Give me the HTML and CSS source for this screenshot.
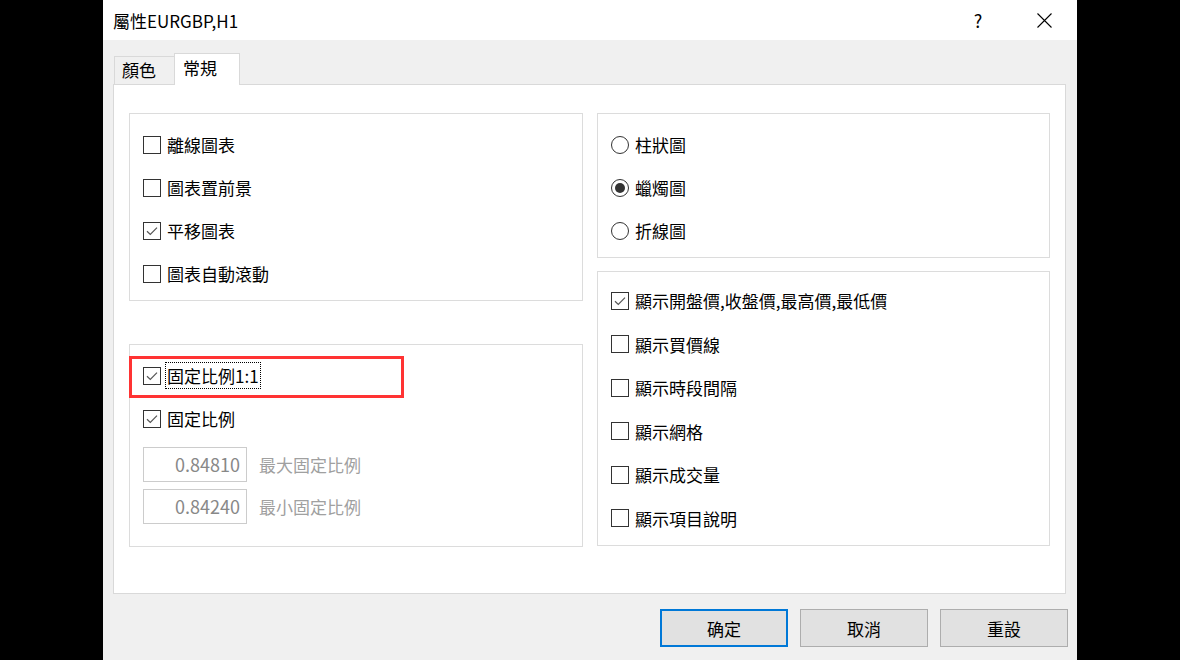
FILE: index.html
```html
<!DOCTYPE html>
<html lang="zh-Hant">
<head>
    <meta charset="UTF-8">
    <title>屬性EURGBP,H1</title>
    <link rel="stylesheet" href="styles.css">
</head>
<body>
    <div class="dialog">
        <div class="titlebar">
            <span class="title">屬性EURGBP,H1</span>
            <span class="tb-btn">?</span>
            <span class="tb-btn">
                <svg width="15" height="15" viewBox="0 0 15 15"><path d="M0.5 0.5L14.5 14.5M14.5 0.5L0.5 14.5" stroke="#000" stroke-width="1.1" fill="none"/></svg>
            </span>
        </div>

        <div class="tabs">
            <div class="tab">顏色</div>
            <div class="tab active">常規</div>
        </div>

        <div class="panel">
            <div class="col col-left">
                <div class="group g-chart">
                    <label class="row"><span class="cb"></span>離線圖表</label>
                    <label class="row"><span class="cb"></span>圖表置前景</label>
                    <label class="row"><span class="cb checked"><svg width="16" height="16" viewBox="0 0 16 16"><path d="M3 8.2L6.3 11.4L13 4.6" stroke="#555" stroke-width="1.2" fill="none"/></svg></span>平移圖表</label>
                    <label class="row"><span class="cb"></span>圖表自動滾動</label>
                </div>

                <div class="group g-scale">
                    <div class="highlight"></div>
                    <label class="row"><span class="cb checked"><svg width="16" height="16" viewBox="0 0 16 16"><path d="M3 8.2L6.3 11.4L13 4.6" stroke="#555" stroke-width="1.2" fill="none"/></svg></span><span class="focus">固定比例1:1</span></label>
                    <label class="row"><span class="cb checked"><svg width="16" height="16" viewBox="0 0 16 16"><path d="M3 8.2L6.3 11.4L13 4.6" stroke="#555" stroke-width="1.2" fill="none"/></svg></span>固定比例</label>
                    <div class="field">
                        <div class="num">0.84810</div>
                        <span class="field-label">最大固定比例</span>
                    </div>
                    <div class="field">
                        <div class="num">0.84240</div>
                        <span class="field-label">最小固定比例</span>
                    </div>
                </div>
            </div>

            <div class="col col-right">
                <div class="group g-type">
                    <label class="row"><span class="rd"></span>柱狀圖</label>
                    <label class="row"><span class="rd checked"></span>蠟燭圖</label>
                    <label class="row"><span class="rd"></span>折線圖</label>
                </div>

                <div class="group g-show">
                    <label class="row"><span class="cb checked"><svg width="16" height="16" viewBox="0 0 16 16"><path d="M3 8.2L6.3 11.4L13 4.6" stroke="#555" stroke-width="1.2" fill="none"/></svg></span>顯示開盤價,收盤價,最高價,最低價</label>
                    <label class="row"><span class="cb"></span>顯示買價線</label>
                    <label class="row"><span class="cb"></span>顯示時段間隔</label>
                    <label class="row"><span class="cb"></span>顯示網格</label>
                    <label class="row"><span class="cb"></span>顯示成交量</label>
                    <label class="row"><span class="cb"></span>顯示項目說明</label>
                </div>
            </div>
        </div>

        <div class="buttons">
            <button class="btn default">确定</button>
            <button class="btn">取消</button>
            <button class="btn">重設</button>
        </div>
    </div>
</body>
</html>
```

FILE: styles.css
```css
* {
    margin: 0;
    padding: 0;
    box-sizing: border-box;
}
body {
    background: #000;
    font-family: "Noto Sans CJK TC", sans-serif;
    font-size: 17px;
    color: #000;
    width: 1180px;
    height: 660px;
    overflow: hidden;
}
.dialog {
    width: 974px;
    height: 660px;
    margin-left: 103px;
    background: #f0f0f0;
    display: flex;
    flex-direction: column;
}

/* title bar */
.titlebar {
    height: 40px;
    background: #fff;
    display: flex;
    align-items: center;
    padding: 0 10px;
    gap: 20px;
}
.title {
    flex: 1;
    font-size: 17px;
}
.tb-btn {
    width: 46px;
    display: flex;
    justify-content: center;
    align-items: center;
    font-size: 18px;
}

/* tabs */
.tabs {
    height: 45px;
    display: flex;
    align-items: flex-end;
    padding-left: 11px;
    margin-bottom: -1px;
    position: relative;
    z-index: 1;
}
.tab {
    height: 28px;
    width: 60px;
    margin-bottom: 1px;
    padding-left: 7px;
    line-height: 26px;
    background: #f0f0f0;
    border: 1px solid #d9d9d9;
    border-right: none;
    border-bottom: none;
}
.tab.active {
    height: 32px;
    width: 66px;
    margin-bottom: 0;
    padding-left: 8px;
    line-height: 28px;
    background: #fff;
    border-right: 1px solid #d9d9d9;
}

/* panel */
.panel {
    height: 510px;
    margin: 0 11px 0 10px;
    background: #fff;
    border: 1px solid #d9d9d9;
    padding: 28px 15px 0;
    display: flex;
    gap: 14px;
}
.col {
    display: flex;
    flex-direction: column;
}
.col-left {
    width: 454px;
    gap: 43px;
}
.col-right {
    width: 453px;
    gap: 13px;
}
.group {
    position: relative;
    border: 1px solid #dcdcdc;
    padding: 9px 12px 5px 13px;
}
.g-show {
    padding-top: 7px;
}
.g-show .row {
    height: 43.5px;
}
.g-scale {
    padding-bottom: 22px;
}
.row {
    height: 43px;
    display: flex;
    align-items: center;
    white-space: nowrap;
}

/* checkbox and radio */
.cb {
    width: 18px;
    height: 18px;
    flex: none;
    border: 1px solid #333;
    background: #fff;
    margin-right: 6px;
    display: flex;
    justify-content: center;
    align-items: center;
}
.rd {
    width: 18px;
    height: 18px;
    flex: none;
    border: 1px solid #333;
    border-radius: 50%;
    background: #fff;
    margin-right: 6px;
    display: flex;
    justify-content: center;
    align-items: center;
}
.rd.checked::after {
    content: "";
    width: 10px;
    height: 10px;
    border-radius: 50%;
    background: #333;
}
.focus {
    border: 1px dotted #000;
    padding: 0 1px;
    margin-left: -2px;
    line-height: 25px;
}

/* scale fields */
.field {
    display: flex;
    align-items: center;
    margin-top: 7px;
}
.num {
    width: 104px;
    height: 35px;
    border: 1px solid #ccc;
    background: #fff;
    color: #888;
    text-align: right;
    padding-right: 6px;
    line-height: 33px;
    font-size: 18px;
}
.field-label {
    margin-left: 12px;
    color: #a0a0a0;
}

/* red marker */
.highlight {
    position: absolute;
    left: -1px;
    top: 11px;
    width: 275px;
    height: 42px;
    border: 3px solid #f33;
}

/* buttons */
.buttons {
    display: flex;
    justify-content: flex-end;
    gap: 12px;
    padding: 15px 9px 0 0;
}
.btn {
    width: 128px;
    height: 38px;
    background: #e1e1e1;
    border: 1px solid #adadad;
    font: inherit;
    color: #000;
}
.btn.default {
    border: 2px solid #0078d7;
}
```
